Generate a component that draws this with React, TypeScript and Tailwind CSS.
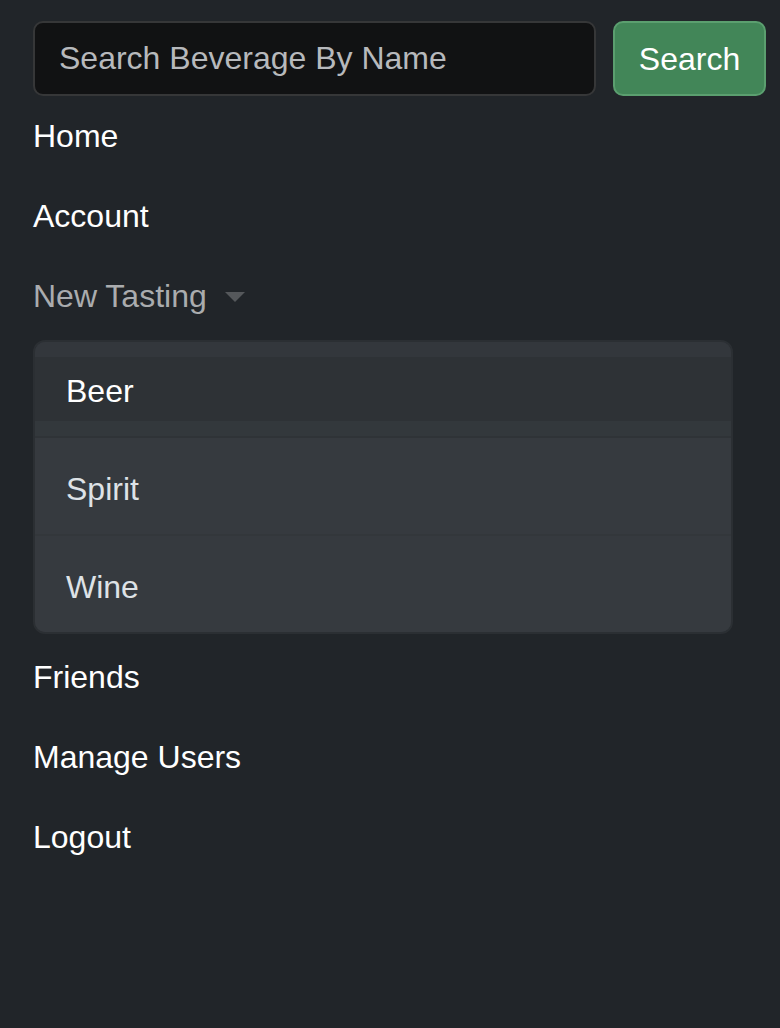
import React from "react";

export default function App() {
  const font = { fontFamily: '"Liberation Sans", Arial, sans-serif' };
  return (
    <div className="min-h-screen w-full bg-[#212529] pl-[33px] pr-[14px] pt-[21px]" style={font}>
      <form className="flex gap-[17px]" onSubmit={(e) => e.preventDefault()}>
        <input
          className="h-[75px] w-[563px] rounded-[10px] border-2 border-[#363738] bg-[#111213] pl-[24px] text-[32px] text-white outline-none placeholder:text-[#b7b9bc]"
          placeholder="Search Beverage By Name"
        />
        <button
          type="submit"
          className="h-[75px] w-[153px] rounded-[10px] border-2 border-[#5b9f6f] bg-[#428658] text-[32px] text-white"
        >
          Search
        </button>
      </form>
      <ul className="flex flex-col">
        <li className="py-[16px] text-[32px] leading-[48px] text-white">Home</li>
        <li className="py-[16px] text-[32px] leading-[48px] text-white">Account</li>
        <li className="flex items-center py-[16px] text-[32px] leading-[48px] text-[#aaacae]">
          New Tasting
          <span className="ml-[18px] mt-[2px] h-0 w-0 border-x-[10px] border-t-[10px] border-x-transparent border-t-[#55585b]" />
        </li>
        <li className="mb-[3px] mt-[4px] w-[700px] overflow-hidden rounded-[12px] border-2 border-[#2b2f33] bg-[#33373c]">
          <div className="h-[15px] bg-[#33373c]" />
          <div className="flex h-[64px] items-center bg-[#2e3236] pl-[31px] pt-[4px] text-[32px] text-white">Beer</div>
          <div className="h-[15px] bg-[#33383c]" />
          <div className="h-[2px] bg-[#2f3337]" />
          <div className="flex h-[96px] items-center bg-[#363a3f] pl-[31px] pt-[5px] text-[32px] text-[#dee2e6]">Spirit</div>
          <div className="h-[2px] bg-[#33373b]" />
          <div className="flex h-[96px] items-center bg-[#363a3f] pl-[31px] pt-[5px] text-[32px] text-[#dee2e6]">Wine</div>
        </li>
        <li className="py-[16px] text-[32px] leading-[48px] text-white">Friends</li>
        <li className="py-[16px] text-[32px] leading-[48px] text-white">Manage Users</li>
        <li className="py-[16px] text-[32px] leading-[48px] text-white">Logout</li>
      </ul>
    </div>
  );
}
